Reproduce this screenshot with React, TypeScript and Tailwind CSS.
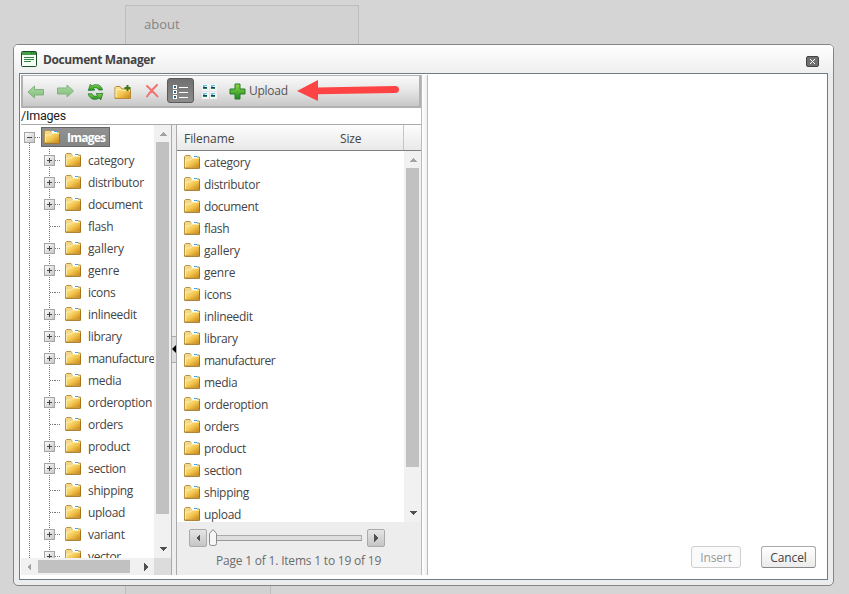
import React from "react";

const tree: [string, boolean][] = [
  ["category", true], ["distributor", true], ["document", true], ["flash", false],
  ["gallery", true], ["genre", true], ["icons", false], ["inlineedit", true],
  ["library", true], ["manufacturer", true], ["media", false], ["orderoption", true],
  ["orders", false], ["product", true], ["section", true], ["shipping", false],
  ["upload", false], ["variant", true], ["vector", true],
];
const files = tree.slice(0, 17).map(([name]) => name);

const spacing: Record<string, string> = {
  category: "tracking-[-0.22px]",
  gallery: "tracking-[-0.15px]",
  manufacturer: "tracking-[-0.5px]",
  document: "tracking-[-0.35px]",
  genre: "tracking-[-0.2px]",
};
const nameSpacing = (name: string) => spacing[name] ?? "tracking-[-0.33px]";

function Folder() {
  return (
    <svg width="16" height="14" viewBox="0 0 16 14" className="block shrink-0">
      <path d="M.5 13V1.5L1.5.5H6L7.5 2H15.5V13Z" fill="#f3d88b" stroke="#b99345" />
      <path d="M7 1H13V3H8Z" fill="#fff" />
      <path d="M10 1h3v1h-3z" fill="#35a7ee" />
      <path d="M1 4.5H6L8 3H15V12.5H1Z" fill="url(#gold)" />
      <path d="M1.5 12V5H6.3L8.2 3.5H15" fill="none" stroke="#fff0ae" strokeWidth=".8" />
      <path d="M.5 13.3H15.5V4" fill="none" stroke="#a6741b" />
    </svg>
  );
}

function Toggle({ minus = false }: { minus?: boolean }) {
  return (
    <svg width="11" height="11" className="block shrink-0">
      <rect x=".5" y=".5" width="10" height="10" fill="url(#box)" stroke="#a5a5a5" />
      <path d={minus ? "M3 5.5h5" : "M3 5.5h5M5.5 3v5"} stroke="#444" />
    </svg>
  );
}

function Tri({ d, color = "#505050" }: { d: "up" | "down" | "left" | "right"; color?: string }) {
  const shapes = {
    up: "M0 6L4 2L8 6Z",
    down: "M0 2H8L4 6Z",
    left: "M6 0V8L2 4Z",
    right: "M2 0V8L6 4Z",
  };
  return <svg width="8" height="8" className="block" shapeRendering="crispEdges"><path d={shapes[d]} fill={color} /></svg>;
}

function Defs() {
  return (
    <svg width="0" height="0" className="absolute">
      <defs>
        <linearGradient id="gold" x2="1" y2="1"><stop stopColor="#ffeaa0" /><stop offset=".5" stopColor="#f4c954" /><stop offset="1" stopColor="#cb8714" /></linearGradient>
        <linearGradient id="box" x2="1" y2="1"><stop stopColor="#fff" /><stop offset="1" stopColor="#c4c4c4" /></linearGradient>
        <linearGradient id="green" x2="0" y2="1"><stop stopColor="#8cda45" /><stop offset="1" stopColor="#208b22" /></linearGradient>
        <linearGradient id="pale" x2="0" y2="1"><stop stopColor="#b2d8a4" /><stop offset="1" stopColor="#7fbd7b" /></linearGradient>
      </defs>
    </svg>
  );
}

function Toolbar() {
  return (
    <div className="flex h-[33px] w-[400px] items-center border-2 border-t border-b-2 border-[#b1b1b1] bg-linear-to-b from-[#fafafa] via-[#e5e5e5] to-[#c8c8c8]">
      <svg width="18" height="14" className="mt-px ml-[4px]"><path d="M1 7L7.5 1V4.5H16.5V10H7.5V13Z" fill="url(#pale)" stroke="#7eb57c" /></svg>
      <svg width="18" height="14" className="ml-[12px]"><path d="M16.5 7L10 1V4H.5V10H10V13Z" fill="url(#pale)" stroke="#7eb57c" /></svg>
      <svg width="17" height="18" viewBox="0 0 17 18" className="ml-[12px] mt-px">
        <path d="M15.5 7C14.5 2.5 10.5 .8 6.8 2L5 3L3.3 1.2L1.3 7.5L8 7L6 5.3C8.6 4 10.6 4.8 11.7 7Z" fill="url(#green)" stroke="#267c36" strokeWidth=".8" />
        <path d="M1.2 10.8C2.2 15.2 6 17.2 10 16L12 15L13.8 16.8L15.8 10.3L9 10.8L11 12.5C8.5 14 6 13.2 5 10.8Z" fill="url(#green)" stroke="#20722e" strokeWidth=".8" />
      </svg>
      <svg width="18" height="16" className="ml-[10px] mt-px">
        <path d="M1 14.5V3.5L2 2.5H6L8 5H16.5V14.5Z" fill="url(#gold)" stroke="#b8893a" />
        <path d="M2 13V5.5H7L9 6.5H16" fill="none" stroke="#fff0ae" />
        <path d="M13.5 1V7M10.5 4H16.5" stroke="#397a17" strokeWidth="2" />
      </svg>
      <svg width="14" height="14" className="ml-[13px]"><path d="M2 2C6 6 9 8 12.5 12.5M12 1C9 4 5 8 2 12.5" fill="none" stroke="#f07370" strokeWidth="2" strokeLinecap="round" /></svg>
      <div className="mb-px ml-[8px] flex h-[25px] w-[27px] items-center justify-center rounded-[3px] border border-[#5a5a5a] bg-linear-to-b from-[#707070] to-[#8d8d8d]">
        <svg width="15" height="14" className="mt-[3px]" shapeRendering="crispEdges">
          {[0, 5, 10].map(y => <React.Fragment key={y}>
            <path d={`M0 ${y}h4v4h-4z`} fill="#fff" /><path d={`M1 ${y + 1}h2v2h-2z`} fill="#28648b" />
            <path d={`M6 ${y + 2}h9v1h-9z`} fill="#fff" />
          </React.Fragment>)}
        </svg>
      </div>
      <svg width="15" height="15" className="ml-2 mt-px" shapeRendering="crispEdges">
        {[[0, 0], [8, 0], [0, 8], [8, 8]].map(([x, y]) => <g key={`${x}-${y}`}>
          <rect x={x} y={y} width="7" height="7" fill="#f4f4f4" />
          <path d={`M${x + 1} ${y + 1}h4v2h-4z`} fill="#68c4df" />
          <path d={`M${x + 3} ${y + 2}h2v1h-2z`} fill="#e5faff" />
          <path d={`M${x + 1} ${y + 3}h4v1h-4z`} fill="#164355" />
          <path d={`M${x + 1} ${y + 4}h4v1h-4z`} fill="#2c8065" />
        </g>)}
      </svg>
      <svg width="17" height="17" className="ml-[12px]">
        <path d="M6 1H11V6H16V11H11V16H6V11H1V6H6Z" fill="url(#green)" stroke="#287c31" />
      </svg>
      <span className="ml-[3px] w-[39px] text-[12px] tracking-[-0.25px] text-[#555]">Upload</span>
      <svg width="104" height="22" className="ml-[8px]">
        <path d="M1 11L22 0V7.5L99 6Q103 6 103 9.5Q103 13 99 13L22 14.2V21Z" fill="#fd4343" />
      </svg>
    </div>
  );
}

function TreePane() {
  return (
    <div className="flex h-[450px] w-[150px] flex-col">
      <div className="flex h-[433px]">
        <div className="relative w-[133px] shrink-0 overflow-hidden">
          <div className="absolute top-[17px] bottom-0 left-[8px] border-l border-dotted border-[#777]" />
          <div className="absolute top-[24px] bottom-0 left-[28px] border-l border-dotted border-[#777]" />
          <div className="relative flex h-[24px] items-center pl-[3px]">
            <Toggle minus />
            <div className="w-[5px] border-t border-dotted border-[#777]" />
            <div className="ml-px flex h-[20px] w-[69px] items-center border border-[#666] bg-linear-to-b from-[#919191] to-[#858585] pl-[2px] text-[12px] font-bold tracking-[-0.75px] text-white">
              <Folder /><span className="ml-[7px] pt-px">Images</span>
            </div>
          </div>
          {tree.map(([name, open]) => (
            <div key={name} className="relative flex h-[22px] items-center pl-[23px]">
              {open ? <Toggle /> : <div className="ml-[6px] w-[5px] shrink-0 border-t border-dotted border-[#777]" />}
              <div className="mr-[5px] w-[5px] shrink-0 border-t border-dotted border-[#777]" />
              <Folder />
              <span className={`ml-[7px] shrink-0 whitespace-nowrap pt-[2px] ${nameSpacing(name)}`}>{name}</span>
            </div>
          ))}
        </div>
        <div className="flex w-[17px] flex-col items-center bg-[#f1f1f1]">
          <div className="flex h-[17px] items-center"><Tri d="up" color="#a3a3a3" /></div>
          <div className="h-[372px] w-[13px] bg-[#c1c1c1]" />
          <div className="mt-auto flex h-[19px] items-center"><Tri d="down" /></div>
        </div>
      </div>
      <div className="flex h-[17px] bg-[#f1f1f1]">
        <div className="flex w-[15px] items-center justify-center"><Tri d="left" color="#a3a3a3" /></div>
        <div className="mt-[2px] ml-[2px] h-[13px] w-[92px] bg-[#c1c1c1]" />
        <div className="ml-auto flex w-[17px] items-center justify-center"><Tri d="right" /></div>
        <div className="w-[17px] bg-[#dcdcdc]" />
      </div>
    </div>
  );
}

function PagerButton({ d }: { d: "left" | "right" }) {
  return (
    <div className="flex size-[18px] shrink-0 items-center justify-center rounded-[2px] border border-[#aaa] bg-linear-to-b from-[#e5e5e5] to-[#c5c5c5]"><Tri d={d} /></div>
  );
}

function FilePane() {
  return (
    <div className="flex h-[450px] w-[244px] flex-col">
      <div className="flex h-[26px] items-center border-b border-[#828282] bg-linear-to-b from-[#fdfdfd] to-[#e9e9e9] text-[#444]">
        <span className="w-[156px] pl-[7px] pt-[2px] tracking-[-0.05px]">Filename</span>
        <span className="w-[70px] pl-[7px] pt-[2px]">Size</span>
        <div className="h-full flex-1 border-l border-[#c5c5c5]" />
      </div>
      <div className="flex h-[371px] overflow-hidden">
        <div className="flex-1">
          {files.map(name => <div key={name} className="flex h-[22px] items-center pl-[7px] pb-px">
            <Folder /><span className={`ml-[4px] pt-[2px] ${nameSpacing(name)}`}>{name}</span>
          </div>)}
        </div>
        <div className="flex w-[17px] flex-col items-center bg-[#f1f1f1]">
          <div className="flex h-[17px] items-center"><Tri d="up" color="#a3a3a3" /></div>
          <div className="h-[299px] w-[13px] bg-[#c1c1c1]" />
          <div className="mt-auto flex h-[19px] items-center"><Tri d="down" /></div>
        </div>
      </div>
      <div className="h-[53px] bg-[#ededed] pt-[7px]">
        <div className="flex h-[18px] items-center pl-3">
          <PagerButton d="left" />
          <svg width="8" height="17" className="mb-px ml-[2px] shrink-0"><path d="M.5 4.5L4 .5L7.5 4.5V14.5Q7.5 16.5 5.5 16.5H2.5Q.5 16.5.5 14.5Z" fill="#f6f6f6" stroke="#8b8b8b" /></svg>
          <div className="h-[6px] w-[145px] border border-l-0 border-[#aaa] border-b-[#999] bg-[#dedede]" />
          <div className="ml-[5px]"><PagerButton d="right" /></div>
        </div>
        <p className="mt-[6px] whitespace-nowrap pl-[39px] text-[12px] leading-4 tracking-[-0.2px] text-[#6c6c6c]">Page 1 of 1. Items 1 to 19 of 19</p>
      </div>
    </div>
  );
}

export default function App() {
  return (
    <main className="relative h-[594px] w-[849px] overflow-hidden bg-[#d5d5d5] font-['Open_Sans','Noto_Sans',sans-serif] text-[12px] leading-[16px] tracking-[-0.12px] text-[#444]">
      <Defs />
      <div className="absolute top-[5px] left-[125px] h-[100px] w-[234px] border-t border-x border-[#bcbcbc] bg-[#d2d2d2] pt-[10px] pl-[18px] text-[13px] tracking-[0px] text-[#858585]">about</div>
      <div className="absolute bottom-0 left-[125px] h-[20px] w-[146px] border-x border-[#bcbcbc] bg-[#d2d2d2]" />
      <section className="absolute top-[44px] left-[13px] flex h-[542px] w-[821px] flex-col rounded-[5px] border border-[#858585] bg-[#ececec]">
        <header className="flex h-[28px] shrink-0 items-center rounded-t bg-linear-to-b from-white to-[#efefef] pl-[7px]">
          <svg width="16" height="16" viewBox="0 0 16 16"><rect x=".5" y=".5" width="15" height="15" rx="1" fill="#f7fff4" stroke="#174b2b" /><path d="M1 1H15V4H1Z" fill="#43a047" /><path d="M10 2h1M12 2h1M14 2h1" stroke="#0c4c20" /><path d="M3 6.5H13M3 8.5H13M3 10.5H10" stroke="#328347" /></svg>
          <h1 className="ml-[6px] pt-[2px] text-[12px] font-bold tracking-[-0.4px] text-[#444]">Document Manager</h1>
          <button className="mt-[5px] mr-[14px] ml-auto flex h-[11px] w-[13px] items-center justify-center rounded-[2px] border border-[#444] bg-[#707070]" aria-label="Close">
            <svg width="5" height="5" shapeRendering="crispEdges"><path d="M0 0h1v1h-1zM4 0h1v1h-1zM1 1h1v1h-1zM3 1h1v1h-1zM2 2h1v1h-1zM1 3h1v1h-1zM3 3h1v1h-1zM0 4h1v1h-1zM4 4h1v1h-1z" fill="#fff" /></svg>
          </button>
        </header>
        <div className="ml-[5px] flex h-[507px] w-[809px] border border-[#6e7c84] bg-white pt-px pl-px">
          <div className="h-[501px] w-[400px]">
            <Toolbar />
            <div className="h-[17px] border-b border-[#aaa] font-['Roboto','Liberation_Sans',sans-serif] text-[12.5px] leading-[15px] tracking-[-0.2px] text-[#222]">/Images</div>
            <div className="flex">
              <TreePane />
              <div className="flex h-[450px] w-[6px] items-center border-l border-r border-[#aaa] bg-[#eee]">
                <div className="mb-[2px] flex h-[27px] w-[4px] items-center border-y border-[#aaa] bg-[#ddd]"><svg width="4" height="8"><path d="M4 0V8L0 4Z" fill="#000" /></svg></div>
              </div>
              <FilePane />
            </div>
          </div>
          <div className="h-[500px] w-[7px] border-x border-[#bbb] bg-linear-to-r from-white to-[#efefef]" />
          <div className="flex flex-1 items-end justify-end gap-5 pr-[11px] pb-[11px]">
            <button className="h-[22px] w-[50px] rounded-[3px] border border-[#cfcfcf] bg-[#fafafa] pt-px text-[#999]">Insert</button>
            <button className="h-[22px] w-[55px] rounded-[3px] border border-[#aaa] border-b-[#888] bg-linear-to-b from-white to-[#ebebeb] pt-px">Cancel</button>
          </div>
        </div>
      </section>
    </main>
  );
}
